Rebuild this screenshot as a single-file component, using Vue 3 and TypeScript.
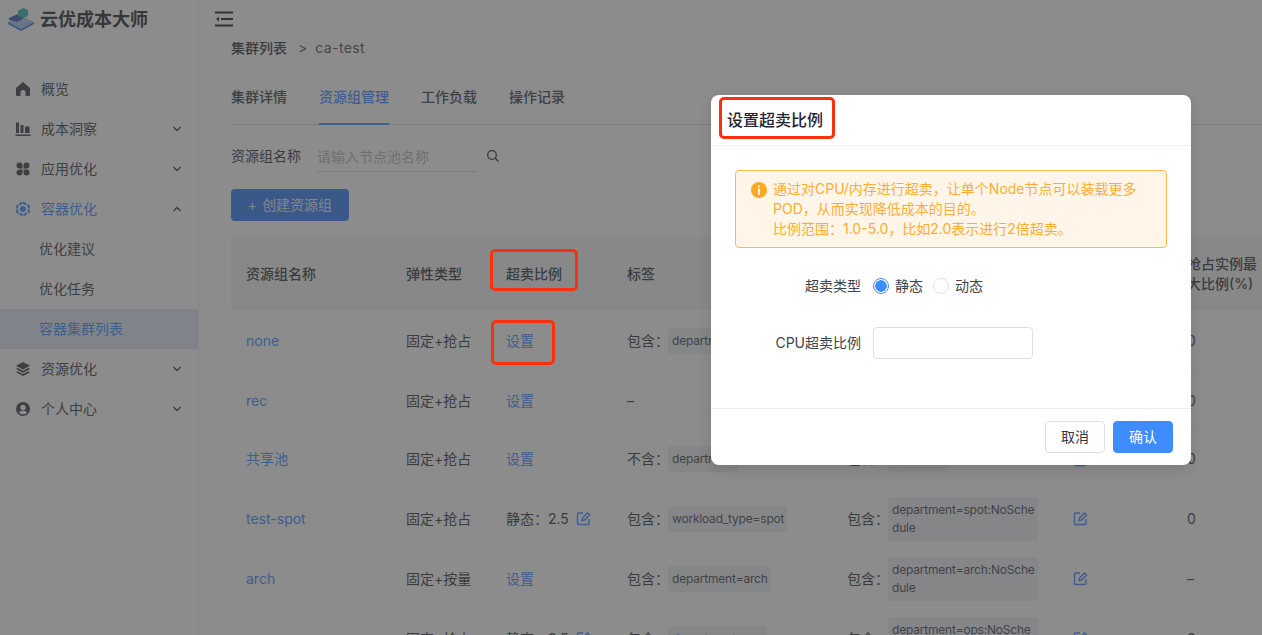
<script setup lang="ts">
interface Cond { op: string; text: string }
interface Row {
  name: string; type: string; h: number; ratio: string;
  label: Cond | null; taint: Cond | null; spot: string;
}
const inc = '包含\uFF1A'
const exc = '不含\uFF1A'
const st = '静态\uFF1A2.5'
const rows: Row[] = [
  { name: 'none', type: '固定+抢占', h: 62, ratio: '', label: { op: inc, text: 'department=none' }, taint: { op: inc, text: 'department=none' }, spot: '0' },
  { name: 'rec', type: '固定+抢占', h: 58, ratio: '', label: null, taint: null, spot: '0' },
  { name: '共享池', type: '固定+抢占', h: 59, ratio: '', label: { op: exc, text: 'department' }, taint: { op: inc, text: 'spot=true' }, spot: '0' },
  { name: 'test-spot', type: '固定+抢占', h: 60, ratio: st, label: { op: inc, text: 'workload_type=spot' }, taint: { op: inc, text: 'department=spot:NoSchedule' }, spot: '0' },
  { name: 'arch', type: '固定+按量', h: 60, ratio: '', label: { op: inc, text: 'department=arch' }, taint: { op: inc, text: 'department=arch:NoSchedule' }, spot: '–' },
  { name: 'ops', type: '固定+抢占', h: 60, ratio: st, label: { op: inc, text: 'department=ops' }, taint: { op: inc, text: 'department=ops:NoSchedule' }, spot: '0' },
]
const menu = [
  { key: 'home', text: '概览', arrow: '' },
  { key: 'bars', text: '成本洞察', arrow: 'down' },
  { key: 'apps', text: '应用优化', arrow: 'down' },
  { key: 'box', text: '容器优化', arrow: 'up', active: true },
  { key: '', text: '优化建议', arrow: '', sub: true },
  { key: '', text: '优化任务', arrow: '', sub: true },
  { key: '', text: '容器集群列表', arrow: '', sub: true, selected: true },
  { key: 'layers', text: '资源优化', arrow: 'down' },
  { key: 'user', text: '个人中心', arrow: 'down' },
]
const tabs = ['集群详情', '资源组管理', '工作负载', '操作记录']
</script>

<template>
  <div class="app">
    <aside class="side">
      <div class="brand">
        <svg class="logo" width="28" height="26" viewBox="0 0 28 26">
          <path d="M1 15 14 9l13 6-13 7z" fill="#a9c4ee" />
          <path d="M1 15v2l13 7 13-7v-2l-13 7z" fill="#3f74d8" />
          <path d="M2 11l9-4 5 2v3l-6 3-8-2z" fill="#3a62a8" />
          <path d="M11 4l5-3 5 2v6l-5 2-5-2z" fill="#2fb5b0" />
        </svg>
        <span class="brand-name">云优成本大师</span>
      </div>
      <nav class="menu">
        <div v-for="m in menu" :key="m.text" class="item" :class="{ sub: m.sub, active: m.active, selected: m.selected }">
          <svg v-if="m.key" class="mi" width="16" height="16" viewBox="0 0 16 16" fill="currentColor">
            <path v-if="m.key === 'home'" d="M8 1 1 7v7a1 1 0 0 0 1 1h3.500v-3.500a2.500 2.500 0 0 1 5 0V15H14a1 1 0 0 0 1-1V7z" />
            <template v-else-if="m.key === 'bars'">
              <rect x="1" y="1.500" width="3" height="10.500" /><rect x="5.500" y="4" width="3" height="8" /><rect x="10" y="5.500" width="4.500" height="6.500" /><rect x="0.500" y="13.500" width="15" height="1.500" />
            </template>
            <path v-else-if="m.key === 'apps'" d="M4.500 1.500a3 3 0 0 1 3 3v3h-3a3 3 0 0 1 0-6zm7 0a3 3 0 0 1 0 6h-3v-3a3 3 0 0 1 3-3zm-7 7h3v3a3 3 0 1 1-3-3zm4 0h3a3 3 0 1 1-3 3z" />
            <template v-else-if="m.key === 'box'">
              <path d="M8 1.500 13.800 4.800v6.400L8 14.500 2.200 11.200V4.800z" fill="none" stroke="currentColor" stroke-width="2" stroke-dasharray="4 1" />
              <circle cx="8" cy="8" r="3" />
            </template>
            <template v-else-if="m.key === 'layers'">
              <path d="M8 1 15 4.800 8 8.500 1 4.800z" />
              <path d="M2.700 7 1 8l7 3.800L15 8l-1.700-1L8 9.800z" />
              <path d="M2.700 10.200 1 11.200 8 15l7-3.800-1.700-1L8 13z" />
            </template>
            <path v-else d="M8 1a7 7 0 1 0 0 14A7 7 0 0 0 8 1zm0 2.800a2.700 2.700 0 1 1 0 5.400 2.700 2.700 0 0 1 0-5.400zm0 9.600a5.400 5.400 0 0 1-4.200-2c.6-1.100 2.300-1.700 4.200-1.700s3.600.6 4.200 1.700a5.400 5.400 0 0 1-4.200 2z" />
          </svg>
          <span class="mt">{{ m.text }}</span>
          <svg v-if="m.arrow" class="chev" :class="{ up: m.arrow === 'up' }" width="10" height="10" viewBox="0 0 10 10">
            <path d="M1.500 3 5 6.500 8.500 3" fill="none" stroke="currentColor" stroke-width="1.500" />
          </svg>
        </div>
      </nav>
    </aside>

    <div class="main">
      <header class="top">
        <svg width="18" height="16" viewBox="0 0 18 16" fill="none" stroke="#1c2230" stroke-width="1.800">
          <path d="M0 1.500h18M6 8h12M0 14.500h18" />
          <path d="M4 5.500 1 8l3 2.500z" fill="#1c2230" stroke="none" />
        </svg>
      </header>
      <section class="content">
        <div class="crumb"><b>集群列表</b><i>&gt;</i><span>ca-test</span></div>
        <div class="tabs">
          <span v-for="(t, i) in tabs" :key="t" class="tab" :class="{ on: i === 1 }">{{ t }}</span>
        </div>
        <div class="search">
          <span class="s-label">资源组名称</span>
          <span class="s-input">请输入节点池名称</span>
          <svg width="14" height="14" viewBox="0 0 14 14" fill="none" stroke="#2a2f3a" stroke-width="1.300">
            <circle cx="6" cy="6" r="4.300" /><path d="m9.200 9.200 3.300 3.300" />
          </svg>
        </div>
        <button class="create"><em>+</em>创建资源组</button>
        <div class="table">
          <div class="tr head">
            <span>资源组名称</span><span>弹性类型</span><span>超卖比例</span><span>标签</span><span>污点</span><span>操作</span><span class="wrap">抢占实例最大比例(%)</span>
          </div>
          <div v-for="r in rows" :key="r.name" class="tr body" :style="{ height: r.h + 'px' }">
            <span class="link">{{ r.name }}</span>
            <span>{{ r.type }}</span>
            <span v-if="r.ratio" class="ratio">{{ r.ratio }}
              <svg class="edit" width="15" height="15" viewBox="0 0 15 15" fill="none" stroke="#3f8cff" stroke-width="1.400">
                <path d="M13 8v4.500a1 1 0 0 1-1 1H2.500a1 1 0 0 1-1-1V3a1 1 0 0 1 1-1H7" />
                <path d="m6 9.500.5-2.500L11.500 2 13.500 4l-5 5z" />
              </svg>
            </span>
            <span v-else class="link">设置</span>
            <span v-if="r.label" class="cond"><label>{{ r.label.op }}</label><code>{{ r.label.text }}</code></span>
            <span v-else>–</span>
            <span v-if="r.taint" class="cond"><label>{{ r.taint.op }}</label><code>{{ r.taint.text }}</code></span>
            <span v-else>–</span>
            <span>
              <svg class="edit" width="15" height="15" viewBox="0 0 15 15" fill="none" stroke="#3f8cff" stroke-width="1.400">
                <path d="M13 8v4.500a1 1 0 0 1-1 1H2.500a1 1 0 0 1-1-1V3a1 1 0 0 1 1-1H7" />
                <path d="m6 9.500.5-2.500L11.500 2 13.500 4l-5 5z" />
              </svg>
            </span>
            <span>{{ r.spot }}</span>
          </div>
        </div>
      </section>
    </div>

    <div class="mask"></div>
    <div class="mark m1"></div>
    <div class="mark m2"></div>

    <div class="modal">
      <div class="m-head">设置超卖比例</div>
      <div class="m-body">
        <div class="alert">
          <svg class="a-icon" width="16" height="16" viewBox="0 0 16 16">
            <circle cx="8" cy="8" r="8" fill="#ffa91f" />
            <rect x="7" y="3.200" width="2" height="2" rx="1" fill="#fff" />
            <rect x="7" y="6.500" width="2" height="6.300" rx="0.500" fill="#fff" />
          </svg>
          <div class="a-text">
            <p>通过对CPU/内存进行超卖&#xFF0C;让单个Node节点可以装载更多</p>
            <p>POD&#xFF0C;从而实现降低成本的目的。</p>
            <p>比例范围&#xFF1A;1.0-5.0&#xFF0C;比如2.0表示进行2倍超卖。</p>
          </div>
        </div>
        <div class="f-row r1">
          <span class="f-label">超卖类型</span>
          <span class="radio checked"></span><span class="r-text">静态</span>
          <span class="radio"></span><span class="r-text">动态</span>
        </div>
        <div class="f-row r2">
          <span class="f-label">CPU超卖比例</span>
          <span class="input"></span>
        </div>
      </div>
      <div class="m-foot">
        <button class="btn">取消</button>
        <button class="btn primary">确认</button>
      </div>
    </div>
    <div class="mark m3"></div>
  </div>
</template>

<style scoped>
.app {
  position: relative;
  display: flex;
  width: 1262px;
  height: 635px;
  overflow: hidden;
  background: #fff;
  color: #333740;
  font: 14px/20px Inter, "Noto Sans CJK SC", sans-serif;
}
.side {
  flex: 0 0 199px;
  background: #fcfefd;
  border-right: 1px solid #f2f3f3;
  box-sizing: border-box;
}
.brand {
  display: flex;
  align-items: center;
  gap: 5px;
  height: 40px;
  padding-left: 7px;
}
.logo { flex: none; }
.brand-name { font-size: 18px; font-weight: 700; color: #2b2e35; }
.menu { margin-top: 29px; }
.item {
  position: relative;
  display: flex;
  align-items: center;
  box-sizing: border-box;
  height: 40px;
  padding-left: 15px;
  color: #3b3f47;
}
.item.sub { padding-left: 39px; }
.item.active, .item.selected { color: #3f8cff; }
.item.selected { background: #e2ecfb; }
.mi { flex: none; margin-right: 10px; }
.chev { position: absolute; left: 172px; top: 15px; color: #3b3f47; }
.chev.up { transform: rotate(180deg); }
.main { flex: 1; min-width: 0; display: flex; flex-direction: column; }
.top {
  position: relative;
  z-index: 1;
  flex: 0 0 42px;
  box-sizing: border-box;
  display: flex;
  align-items: center;
  padding: 0 0 4px 16px;
  background: #fff;
  box-shadow: 0 1px 2px rgba(0, 0, 0, .04);
}
.content { padding: 0 0 0 32px; margin-top: -4px; overflow: hidden; flex: 1; }
.crumb { display: flex; align-items: center; height: 20px; }
.crumb b { font-weight: 500; }
.crumb i { font-style: normal; margin: 0 8px 0 11px; color: #55585f; }
.crumb span { letter-spacing: .4px; color: #4a4d55; }
.tabs {
  display: flex;
  gap: 32px;
  height: 67px;
  border-bottom: 1px solid #d6d8dc;
  box-sizing: border-box;
  padding-top: 19px;
}
.tab { height: 48px; line-height: 20px; padding-top: 10px; box-sizing: border-box; font-weight: 500; color: #3f434b; }
.tab.on { color: #3f8cff; border-bottom: 2px solid #3f8cff; }
.search { display: flex; align-items: center; height: 30px; margin-top: 16px; }
.s-label { width: 86px; }
.s-input {
  width: 160px;
  height: 31px;
  line-height: 31px;
  color: #b5b7bc;
  border-bottom: 1px solid #d6d8dc;
  box-sizing: border-box;
}
.search svg { margin-left: 9px; }
.create {
  display: block;
  width: 118px;
  height: 32px;
  margin-top: 18px;
  padding: 0;
  border: 0;
  border-radius: 4px;
  background: #3580f5;
  color: #e6eefb;
  font: inherit;
}
.create em { font-style: normal; margin-right: 5px; }
.table { margin-top: 16px; width: 1100px; }
.tr {
  display: grid;
  grid-template-columns: 160px 100px 121px 220px 226px 114px 100px;
  align-items: center;
  box-sizing: border-box;
  border-bottom: 1px solid #f3f4f4;
}
.tr > span { padding-left: 15px; box-sizing: border-box; }
.head { height: 73px; background: #f5f6f6; font-weight: 500; border-bottom: 0; }
.wrap { width: 100px; padding-right: 15px; }
.body { background: #fcfefd; }
.link { color: #3f8cff; }
.ratio { display: flex; align-items: center; white-space: nowrap; }
.edit { display: block; }
.ratio .edit { margin-left: 7px; margin-top: -1px; }
.cond { display: flex; align-items: center; }
.cond label { flex: none; width: 41px; white-space: nowrap; }
.cond code {
  flex: none;
  max-width: 150px;
  padding: 4px 3px 4px 4px;
  box-sizing: border-box;
  background: #eef0f6;
  border-radius: 3px;
  font: 12px/18px Inter, "Noto Sans CJK SC", sans-serif;
  letter-spacing: -.2px;
  color: #444850;
  word-break: break-all;
}
.mask { position: absolute; inset: 0; z-index: 2; background: rgba(64, 64, 64, .6); }
.mark {
  position: absolute;
  z-index: 4;
  border: 3px solid #f9310e;
  border-radius: 5px;
  box-sizing: border-box;
}
.m1 { left: 490px; top: 249px; width: 88px; height: 42px; }
.m2 { left: 491px; top: 320px; width: 64px; height: 45px; }
.m3 { left: 719px; top: 97px; width: 116px; height: 42px; }
.modal {
  position: absolute;
  z-index: 3;
  left: 711px;
  top: 95px;
  width: 480px;
  height: 370px;
  display: flex;
  flex-direction: column;
  background: #fff;
  border-radius: 8px;
  box-shadow: 0 4px 14px rgba(0, 0, 0, .12);
}
.m-head {
  flex: 0 0 51px;
  box-sizing: border-box;
  padding: 14px 0 0 16px;
  font-size: 16px;
  line-height: 22px;
  font-weight: 500;
  color: #1d2433;
  border-bottom: 1px solid #ebedf0;
}
.m-body { flex: 1; padding: 24px 24px 0; }
.alert {
  display: flex;
  height: 78px;
  box-sizing: border-box;
  padding: 8px 0 0 15px;
  border: 1px solid #ffb84d;
  border-radius: 4px;
  background: #fff6e9;
  color: #ffad33;
}
.a-icon { flex: none; margin: 3px 6px 0 0; }
.a-text p { margin: 0; white-space: nowrap; }
.f-row { display: flex; align-items: center; }
.r1 { margin-top: 22px; height: 32px; }
.r2 { margin-top: 25px; height: 32px; }
.f-label { width: 126px; text-align: right; margin-right: 12px; color: #40444d; }
.radio {
  width: 16px;
  height: 16px;
  box-sizing: border-box;
  border: 1px solid #dcdfe6;
  border-radius: 50%;
  background: #fff;
}
.radio.checked { border-color: #3f8cff; background: radial-gradient(circle, #3f8cff 5.5px, #fff 6px); }
.r-text { margin: 0 10px 0 6px; color: #40444d; }
.input {
  width: 160px;
  height: 32px;
  box-sizing: border-box;
  border: 1px solid #dcdfe6;
  border-radius: 4px;
}
.m-foot {
  flex: 0 0 57px;
  display: flex;
  justify-content: flex-end;
  gap: 8px;
  padding: 12px 18px 0 0;
  box-sizing: border-box;
  border-top: 1px solid #ebedf0;
}
.btn {
  width: 60px;
  height: 32px;
  padding: 0;
  border: 1px solid #dcdfe6;
  border-radius: 4px;
  background: #fff;
  color: #333740;
  font: inherit;
}
.btn.primary { border-color: #3f8cff; background: #3f8cff; color: #fff; }
</style>

<style>
html, body { overflow: hidden; }
</style>
